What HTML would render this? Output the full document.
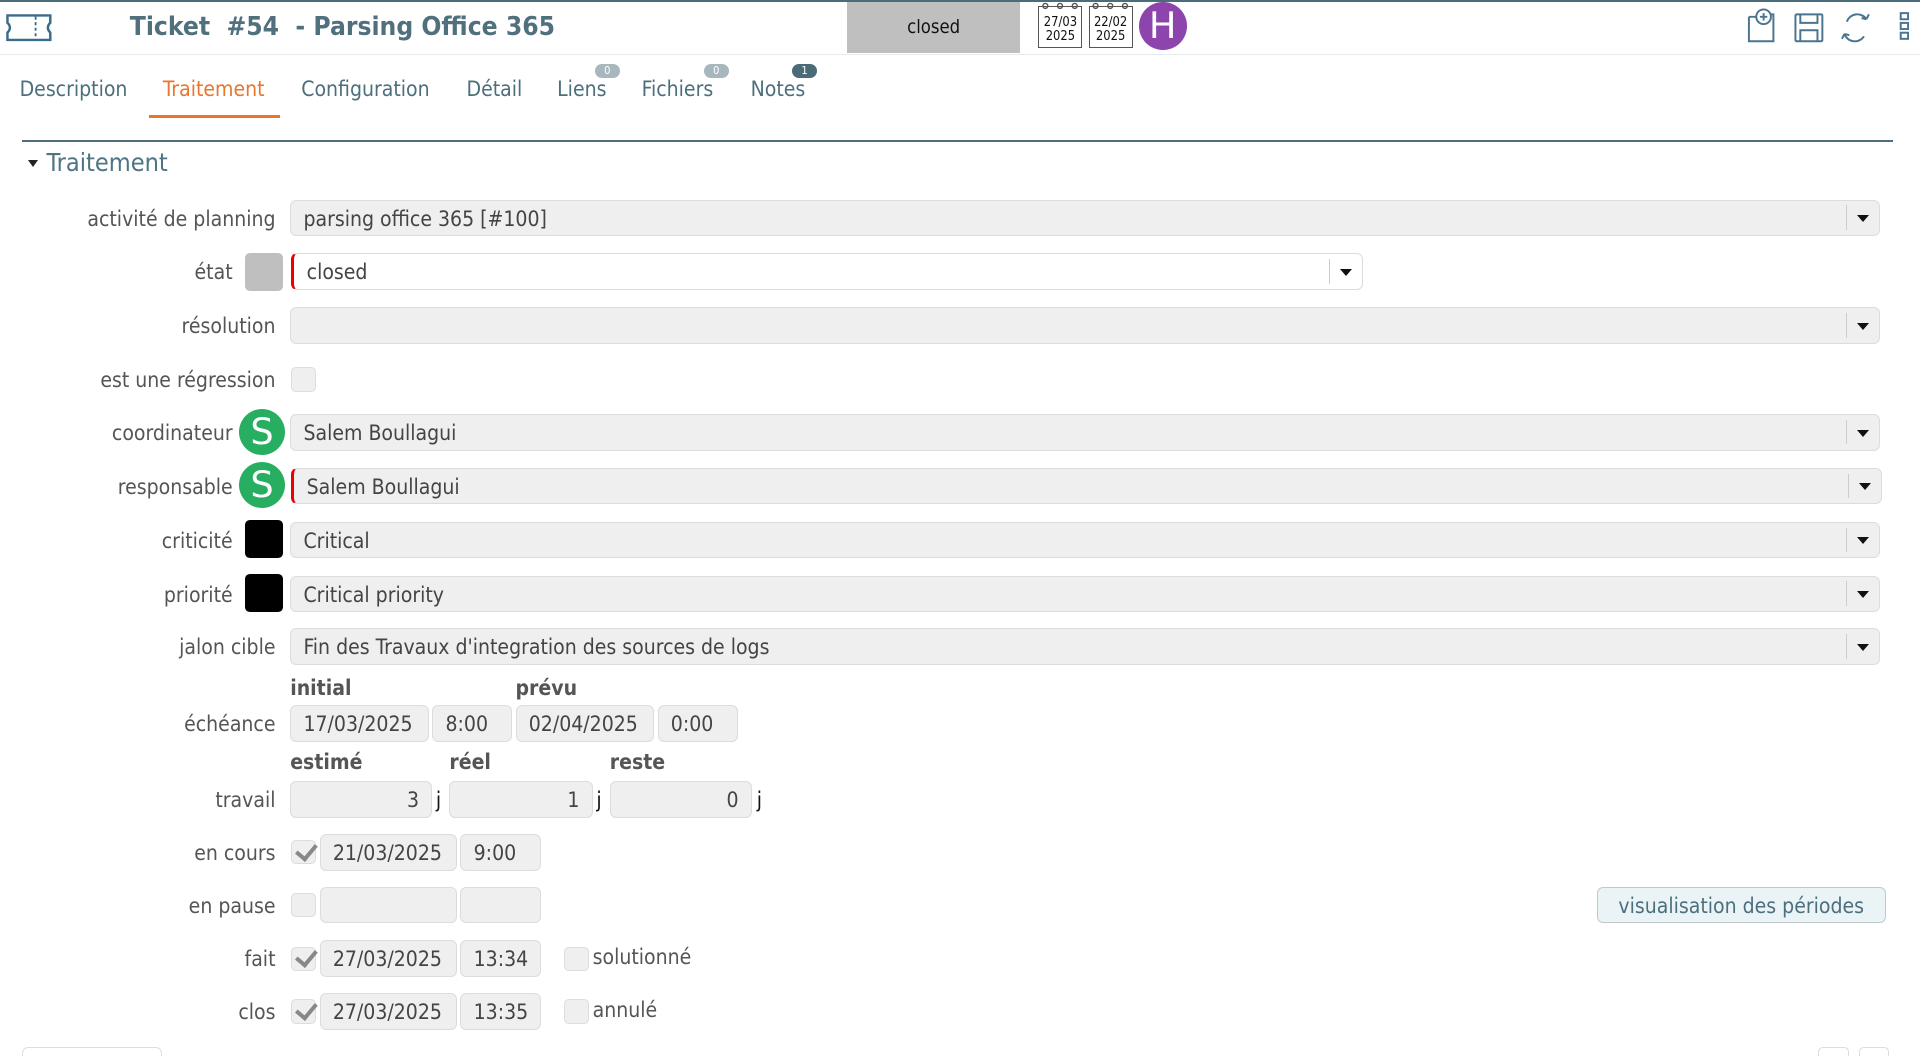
<!DOCTYPE html>
<html><head><meta charset="utf-8">
<style>
*{box-sizing:border-box;margin:0;padding:0}
html,body{width:1920px;height:1056px;overflow:hidden;background:#fff}
#w{position:absolute;left:0;top:0;width:1568px;height:862px;overflow:hidden;zoom:1.22449;font-family:"DejaVu Sans Condensed","DejaVu Sans","Liberation Sans",sans-serif;color:#555}
.a{position:absolute}
.lbl{position:absolute;text-align:right;font-size:17.2px;color:#555;line-height:31px}
.inp{position:absolute;height:30px;background:#efefef;border:1px solid #dcdcdc;border-radius:5px;font-size:17.2px;line-height:29px;padding-left:10px;color:#444}
.dd::after{content:"";position:absolute;right:26px;top:4px;height:20px;border-left:1px solid #ccc}
.dd::before{content:"";position:absolute;right:8px;top:12px;border-left:5px solid transparent;border-right:5px solid transparent;border-top:6px solid #111}
.red{border-left:3px solid #e00}
.cb{position:absolute;width:20px;height:20px;background:#efefef;border:1px solid #ddd;border-radius:4px}
.ck::after{content:"";position:absolute;left:3px;top:1px;width:7px;height:13px;border-right:4px solid #888;border-bottom:4px solid #888;transform:rotate(40deg);left:6px;top:-1px}
.hd{position:absolute;font-weight:bold;font-size:17.2px;color:#555}
.av{position:absolute;width:38px;height:38px;border-radius:50%;background:#27ae60;color:#fff;font-size:30px;line-height:38px;text-align:center;font-family:"DejaVu Sans",sans-serif}
.sw{position:absolute;width:31px;height:31px;border-radius:4px;background:#000}
.tab{position:absolute;top:62px;font-size:17.2px;color:#4d6f7d}
.bd{position:absolute;top:52px;height:12px;border-radius:6px;font-size:9px;line-height:12px;color:#fff;text-align:center;width:20px;background:#a8b6bd}
.r{text-align:right;padding-right:10px}
</style></head><body><div id="w">
<div class="a" style="left:0;top:0;width:1568px;height:2px;background:#4a6d7c"></div>
<div class="a" style="left:0;top:44px;width:1568px;height:1px;background:#e4ecef"></div>
<svg class="a" style="left:4px;top:11px" width="40" height="24" viewBox="0 0 40 24"><path d="M2 2H37V8Q33 12 37 16V22H2V16Q6 12 2 8Z" fill="none" stroke="#3b6b8a" stroke-width="2"/><path d="M25 3V21" stroke="#3b6b8a" stroke-width="1.5" stroke-dasharray="2.5 2"/></svg>
<div class="a" style="left:106px;top:10px;font-size:21.4px;font-weight:bold;color:#50707d;white-space:pre">Ticket  #54  - Parsing Office 365</div>
<div class="a" style="left:692px;top:2px;width:141px;height:41px;background:#bfbfbf;color:#111;font-size:15px;line-height:43px;text-align:center">closed</div>
<div class="a" style="left:848px;top:5px;width:36px;height:34px;border:1px solid #555;background:#fff;font-size:10.5px;line-height:12px;text-align:center;padding-top:7px;color:#111">27/03<br>2025</div>
<div class="a" style="left:889px;top:5px;width:36px;height:34px;border:1px solid #555;background:#fff;font-size:10.5px;line-height:12px;text-align:center;padding-top:7px;color:#111">22/02<br>2025</div>
<svg class="a" style="left:848px;top:1px" width="80" height="8"><g fill="none" stroke="#555" stroke-width="1.2"><circle cx="6" cy="4" r="2"/><circle cx="18" cy="4" r="2"/><circle cx="30" cy="4" r="2"/><circle cx="47" cy="4" r="2"/><circle cx="59" cy="4" r="2"/><circle cx="71" cy="4" r="2"/></g></svg>
<div class="a" style="left:930px;top:2px;width:39px;height:39px;border-radius:50%;background:#8e44ad;color:#fff;font-size:30px;line-height:39px;text-align:center;font-family:'DejaVu Sans',sans-serif">H</div>
<svg class="a" style="left:1424px;top:6px" width="140" height="32" viewBox="0 0 140 32" fill="none" stroke="#4a7490" stroke-width="1.6"><path d="M4 8H10M22 6H24V28H4V8"/><circle cx="16" cy="8" r="6"/><path d="M16 5V11M13 8H19"/><rect x="42" y="6" width="22" height="22" rx="1"/><path d="M46 6V13H60V6M46 28V19H60V28"/><path d="M84 12A9 9 0 0 1 100 10M98 24A9 9 0 0 1 82 22M100 10L102 6M100 10L96 9M82 22L80 26M82 22L86 23"/><rect x="128" y="5" width="6" height="5"/><rect x="128" y="13" width="6" height="5"/><rect x="128" y="21" width="6" height="5"/></svg>
<div class="tab" style="left:16px">Description</div>
<div class="tab" style="left:133px;color:#e8762d">Traitement</div>
<div class="a" style="left:122px;top:94px;width:107px;height:2px;background:#e8762d"></div>
<div class="tab" style="left:246px">Configuration</div>
<div class="tab" style="left:381px">Détail</div>
<div class="tab" style="left:455px">Liens</div>
<div class="tab" style="left:524px">Fichiers</div>
<div class="tab" style="left:613px">Notes</div>
<div class="bd" style="left:486px">0</div>
<div class="bd" style="left:575px">0</div>
<div class="bd" style="left:647px;background:#4b6b78">1</div>
<div class="a" style="left:18px;top:114px;width:1528px;height:2px;background:#4d6f7d"></div>
<div class="a" style="left:23px;top:131px;border-left:4.5px solid transparent;border-right:4.5px solid transparent;border-top:6px solid #222"></div>
<div class="a" style="left:38px;top:121px;font-size:20.5px;color:#4d7585">Traitement</div>

<div class="lbl" style="left:0;width:225px;top:163px">activité de planning</div>
<div class="inp dd" style="left:237px;top:163px;width:1298px">parsing office 365 [#100]</div>
<div class="lbl" style="left:0;width:190px;top:207px">état</div>
<div class="sw" style="left:200px;top:207px;background:#bfbfbf"></div>
<div class="inp dd red" style="left:238px;top:207px;width:875px;background:#fff">closed</div>
<div class="lbl" style="left:0;width:225px;top:251px">résolution</div>
<div class="inp dd" style="left:237px;top:251px;width:1298px"></div>
<div class="lbl" style="left:0;width:225px;top:295px">est une régression</div>
<div class="cb" style="left:238px;top:300px"></div>
<div class="lbl" style="left:0;width:190px;top:338px">coordinateur</div>
<div class="av" style="left:195px;top:334px">S</div>
<div class="inp dd" style="left:237px;top:338px;width:1298px">Salem Boullagui</div>
<div class="lbl" style="left:0;width:190px;top:382px">responsable</div>
<div class="av" style="left:195px;top:377px">S</div>
<div class="inp dd red" style="left:238px;top:382px;width:1299px">Salem Boullagui</div>
<div class="lbl" style="left:0;width:190px;top:426px">criticité</div>
<div class="sw" style="left:200px;top:425px"></div>
<div class="inp dd" style="left:237px;top:426px;width:1298px">Critical</div>
<div class="lbl" style="left:0;width:190px;top:470px">priorité</div>
<div class="sw" style="left:200px;top:469px"></div>
<div class="inp dd" style="left:237px;top:470px;width:1298px">Critical priority</div>
<div class="lbl" style="left:0;width:225px;top:513px">jalon cible</div>
<div class="inp dd" style="left:237px;top:513px;width:1298px">Fin des Travaux d'integration des sources de logs</div>

<div class="hd" style="left:237px;top:551px">initial</div>
<div class="hd" style="left:421px;top:551px">prévu</div>
<div class="lbl" style="left:0;width:225px;top:576px">échéance</div>
<div class="inp" style="left:237px;top:576px;width:113px">17/03/2025</div>
<div class="inp" style="left:353px;top:576px;width:65px">8:00</div>
<div class="inp" style="left:421px;top:576px;width:113px">02/04/2025</div>
<div class="inp" style="left:537px;top:576px;width:66px">0:00</div>
<div class="hd" style="left:237px;top:612px">estimé</div>
<div class="hd" style="left:367px;top:612px">réel</div>
<div class="hd" style="left:498px;top:612px">reste</div>
<div class="lbl" style="left:0;width:225px;top:638px">travail</div>
<div class="inp r" style="left:237px;top:638px;width:116px">3</div>
<div class="a" style="left:356px;top:643px;font-size:17.2px;color:#111">j</div>
<div class="inp r" style="left:367px;top:638px;width:117px">1</div>
<div class="a" style="left:487px;top:643px;font-size:17.2px;color:#111">j</div>
<div class="inp r" style="left:498px;top:638px;width:116px">0</div>
<div class="a" style="left:618px;top:643px;font-size:17.2px;color:#111">j</div>

<div class="lbl" style="left:0;width:225px;top:681px">en cours</div>
<div class="cb ck" style="left:238px;top:686px"></div>
<div class="inp" style="left:261px;top:681px;width:112px">21/03/2025</div>
<div class="inp" style="left:376px;top:681px;width:66px">9:00</div>
<div class="lbl" style="left:0;width:225px;top:724px">en pause</div>
<div class="cb" style="left:238px;top:729px"></div>
<div class="inp" style="left:261px;top:724px;width:112px"></div>
<div class="inp" style="left:376px;top:724px;width:66px"></div>
<div class="lbl" style="left:0;width:225px;top:768px">fait</div>
<div class="cb ck" style="left:238px;top:773px"></div>
<div class="inp" style="left:261px;top:768px;width:112px">27/03/2025</div>
<div class="inp" style="left:376px;top:768px;width:66px">13:34</div>
<div class="cb" style="left:461px;top:773px"></div>
<div class="a" style="left:484px;top:771px;font-size:17.2px;color:#555">solutionné</div>
<div class="lbl" style="left:0;width:225px;top:811px">clos</div>
<div class="cb ck" style="left:238px;top:816px"></div>
<div class="inp" style="left:261px;top:811px;width:112px">27/03/2025</div>
<div class="inp" style="left:376px;top:811px;width:66px">13:35</div>
<div class="cb" style="left:461px;top:816px"></div>
<div class="a" style="left:484px;top:814px;font-size:17.2px;color:#555">annulé</div>

<div class="a" style="left:1304px;top:724px;width:236px;height:30px;background:#eaf4f7;border:1px solid #c0c8cc;border-radius:5px;color:#4d6f7d;font-size:17.2px;line-height:30px;text-align:center">visualisation des périodes</div>
<div class="a" style="left:18px;top:855px;width:114px;height:20px;border:1px solid #ddd;border-radius:5px"></div>
<div class="a" style="left:1485px;top:855px;width:25px;height:20px;border:1px solid #ddd;border-radius:4px"></div>
<div class="a" style="left:1518px;top:855px;width:25px;height:20px;border:1px solid #ddd;border-radius:4px"></div>
</div></body></html>
